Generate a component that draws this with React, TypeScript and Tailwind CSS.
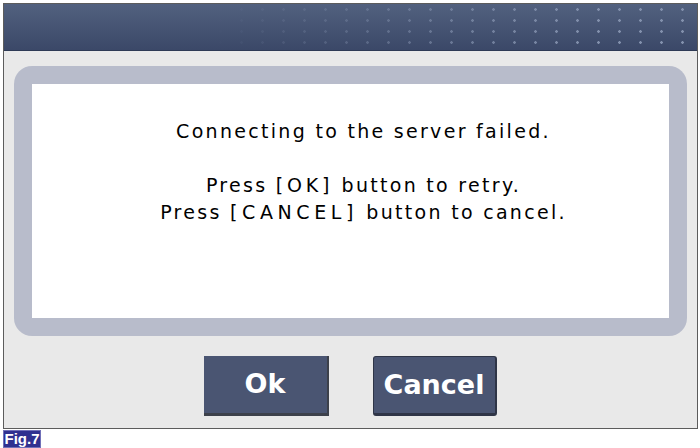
export default function App() {
  return (
    <div className="w-[700px] h-[448px] bg-white pt-[3px] pl-[3px] font-['DejaVu_Sans',sans-serif]">
      {/* dialog frame */}
      <div className="w-[695px] h-[426px] border border-[#5c5c5c] bg-[#e9e9e9] flex flex-col">
        {/* title bar */}
        <div className="relative h-[47px] bg-gradient-to-b from-[#52617f] to-[#3b4868] border-b border-[#2e3a55]">
          <div className="absolute inset-0 bg-[radial-gradient(circle,#8391ad_1px,transparent_1.6px)] bg-[length:21px_11px] bg-[position:-4px_0px] [mask-image:linear-gradient(to_right,transparent_30%,black_85%)]"></div>
        </div>

        {/* message panel */}
        <div className="mx-[10px] mt-[15px] h-[270px] rounded-[18px] bg-[#b8bccb] p-[18px]">
          <div className="h-full bg-white pt-[34px] pl-[26px] text-center text-black text-[19px] leading-[27px] tracking-[2.3px]">
            <p>Connecting to the server failed.</p>
            <p className="mt-[27px]">
              Press <span className="tracking-[3.8px]">[OK]</span> button to retry.
            </p>
            <p>
              Press <span className="tracking-[4.6px]">[CANCEL]</span> button to cancel.
            </p>
          </div>
        </div>

        {/* buttons */}
        <div className="mt-[20px] flex justify-center gap-[44px] pr-px">
          <button className="w-[125px] h-[60px] bg-[#4a5572] border-r-2 border-b-[3px] border-[#3d414b] text-white text-[27px] font-bold">
            Ok
          </button>
          <button className="w-[124px] h-[60px] rounded-[3px] bg-[#4a5572] border border-r-2 border-b-[3px] border-[#2f3547] text-white text-[27px] font-bold">
            Cancel
          </button>
        </div>
      </div>

      {/* figure label */}
      <div className="mt-[1px] w-[38px] h-[18px] bg-[#2f3090] border border-[#7070b8] text-white text-[15px] leading-[16px] font-bold font-['Liberation_Sans',sans-serif] text-center">
        Fig.7
      </div>
    </div>
  )
}
